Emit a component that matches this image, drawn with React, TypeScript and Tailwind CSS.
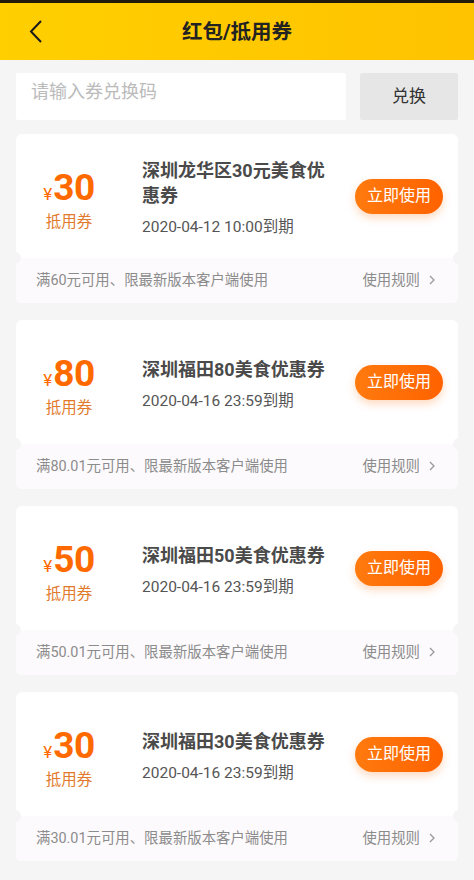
import React from "react";

type Coupon = {
  amount: string;
  title: string;
  date: string;
  cond: string;
};

const coupons: Coupon[] = [
  { amount: "30", title: "深圳龙华区30元美食优惠券", date: "2020-04-12 10:00到期", cond: "满60元可用、限最新版本客户端使用" },
  { amount: "80", title: "深圳福田80美食优惠券", date: "2020-04-16 23:59到期", cond: "满80.01元可用、限最新版本客户端使用" },
  { amount: "50", title: "深圳福田50美食优惠券", date: "2020-04-16 23:59到期", cond: "满50.01元可用、限最新版本客户端使用" },
  { amount: "30", title: "深圳福田30美食优惠券", date: "2020-04-16 23:59到期", cond: "满30.01元可用、限最新版本客户端使用" },
];

function CouponCard({ c }: { c: Coupon }) {
  return (
    <div className="relative h-[169px] rounded-[6px] bg-white overflow-hidden">
      <div className="flex h-[124px] items-center">
        <div className="flex w-[106px] shrink-0 flex-col items-center pt-[9px]">
          <div className="flex items-baseline text-[#ff6a00]">
            <span className="mr-[1px] text-[17px] leading-none">¥</span>
            <span className="text-[37px] font-bold leading-[40px] tracking-[-0.5px]">{c.amount}</span>
          </div>
          <div className="mt-[3px] text-[15.5px] leading-[22px] text-[#e27a2e]">抵用券</div>
        </div>
        <div className="ml-[20px] flex w-[200px] flex-col pt-[4px]">
          <div className="text-[18px] font-bold leading-[25px] text-[#4a4a4a]">{c.title}</div>
          <div className="mt-[8px] text-[15.5px] leading-[22px] text-[#555555]">{c.date}</div>
        </div>
        <div className="ml-auto mr-[15px] flex h-[35px] w-[88px] items-center justify-center rounded-full bg-gradient-to-r from-[#ff7a0e] to-[#ff6200] text-[16px] text-white shadow-[0_4px_8px_rgba(255,106,0,0.25)]">
          立即使用
        </div>
      </div>
      <div className="flex h-[45px] items-center justify-between bg-[#fcfafc] pl-[20px] pr-[20px]">
        <span className="text-[14.4px] text-[#8c8c8c]">{c.cond}</span>
        <span className="flex items-center text-[14.4px] text-[#8c8c8c]">
          使用规则
          <svg width="12" height="12" viewBox="0 0 12 12" className="ml-[6px]">
            <path d="M4 2 L8 6 L4 10" fill="none" stroke="#999" strokeWidth="1.3" />
          </svg>
        </span>
      </div>
      <div className="absolute left-[-7px] top-[118px] h-[12px] w-[12px] rounded-full bg-[#f5f5f5]" />
      <div className="absolute right-[-7px] top-[118px] h-[12px] w-[12px] rounded-full bg-[#f5f5f5]" />
    </div>
  );
}

export default function App() {
  return (
    <div
      className="min-h-[880px] w-[474px] bg-[#f5f5f5]"
      style={{ fontFamily: 'Roboto, "Noto Sans CJK SC", sans-serif' }}
    >
      <div className="h-[3px] bg-[#221a0a]" />
      <div className="relative flex h-[57px] items-center justify-center bg-gradient-to-r from-[#ffcf00] to-[#ffc300] pt-[2px]">
        <svg width="14" height="24" viewBox="0 0 14 24" className="absolute left-[29px] top-[17px]">
          <path d="M12 1 L2 11.5 L12 22" fill="none" stroke="#1a1a1a" strokeWidth="2" />
        </svg>
        <span className="text-[20.5px] font-bold text-[#222]">红包/抵用券</span>
      </div>
      <div className="px-[16px] pt-[13px]">
        <div className="flex h-[47px] gap-[14px]">
          <div className="flex flex-1 items-start rounded-[2px] bg-white pl-[15px] pt-[6px] text-[18px] leading-[26px] text-[#bbbbbb]">
            请输入券兑换码
          </div>
          <div className="flex w-[98px] items-center justify-center rounded-[2px] bg-[#e6e6e6] text-[17px] text-[#333]">
            兑换
          </div>
        </div>
        <div className="mt-[14px] flex flex-col gap-[17px]">
          {coupons.map((c, i) => (
            <CouponCard key={i} c={c} />
          ))}
        </div>
      </div>
    </div>
  );
}
